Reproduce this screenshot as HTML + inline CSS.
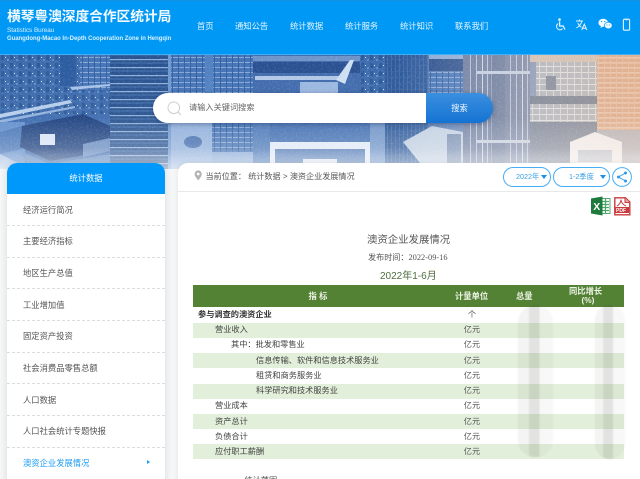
<!DOCTYPE html>
<html lang="zh-CN">
<head>
<meta charset="utf-8">
<title>澳资企业发展情况</title>
<style>
html,body{margin:0;padding:0;width:640px;height:479px;overflow:hidden;background:#f6f7f8}
body{font-family:"Liberation Sans","Noto Sans CJK SC",sans-serif;color:#444}
#w{position:absolute;left:0;top:0;width:640px;height:479px;overflow:hidden;filter:blur(.3px)}
.a{position:absolute;white-space:nowrap;line-height:1}
#head{position:absolute;left:0;top:0;width:640px;height:55px;background:#0098f5;border-top:1px solid #1590e0;border-bottom:1px solid #3fb0f5;box-sizing:border-box}
.nav{color:#e6f5ff;font-size:8.3px;top:21px}
#hero{position:absolute;left:0;top:54px;width:640px;height:115px;overflow:hidden}
#side{position:absolute;left:7px;top:163px;width:158px;height:330px;background:#fff;border-radius:10px;box-shadow:0 0 8px rgba(0,0,0,.12);overflow:hidden}
#side .h{height:31px;background:#0098fb;color:#fff;font-size:8.3px;line-height:31px;text-align:center}
#side .i{position:absolute;left:16px;font-size:8.3px;color:#555;line-height:1}
#side .l{position:absolute;left:0;width:158px;border-top:1px dashed #ddd}
#main{position:absolute;left:178px;top:163px;width:470px;height:330px;background:#fff;border-radius:10px;box-shadow:0 0 6px rgba(0,0,0,.08)}
.pill{position:absolute;top:167px;height:20px;box-sizing:border-box;border:1px solid #45aef7;border-radius:10px;color:#3b9fe6;font-size:7.2px;line-height:18px;background:#fff}
.tri{position:absolute;width:0;height:0;border-left:3.5px solid transparent;border-right:3.5px solid transparent;border-top:4px solid #1a8fe6;top:7px}
#thead{position:absolute;left:193px;top:285px;width:431px;height:22px;background:#548235}
.row{position:absolute;left:193px;width:431px;height:15px;background:#e2efda}
.t{position:absolute;font-size:8.2px;line-height:1;color:#444;white-space:nowrap}
.u{position:absolute;left:452px;width:40px;text-align:center;font-size:8.2px;line-height:1;color:#555}
.blur{position:absolute;top:305px;filter:blur(.7px)}
</style>
</head>
<body>
<div id="w">
<div id="hero">
<svg width="640" height="115" viewBox="0 0 640 115" xmlns="http://www.w3.org/2000/svg">
<defs>
<linearGradient id="bg" x1="0" x2="1" y1="0" y2="0"><stop offset="0" stop-color="#3a69ae"/><stop offset=".6" stop-color="#4471b3"/><stop offset=".75" stop-color="#5f7fb0"/><stop offset="1" stop-color="#8d93a8"/></linearGradient>
<linearGradient id="fade" x1="0" x2="0" y1="0" y2="1"><stop offset="0" stop-color="#fff" stop-opacity="0"/><stop offset=".55" stop-color="#fff" stop-opacity=".04"/><stop offset=".82" stop-color="#fff" stop-opacity=".26"/><stop offset="1" stop-color="#fff" stop-opacity=".66"/></linearGradient>
<linearGradient id="peach" x1="0" x2="1" y1="0" y2="0"><stop offset=".62" stop-color="#fff" stop-opacity="0"/><stop offset=".82" stop-color="#f4e6dc" stop-opacity=".32"/><stop offset="1" stop-color="#f6d2b8" stop-opacity=".4"/></linearGradient>
<pattern id="hs" width="10" height="8" patternUnits="userSpaceOnUse"><rect width="10" height="8" fill="#28528f"/><rect y="5" width="10" height="1.2" fill="#8eaedb"/><rect y="0" width="10" height="2" fill="#36629f"/></pattern>
<pattern id="hs2" width="6" height="5" patternUnits="userSpaceOnUse"><rect width="6" height="5" fill="#4372b5"/><rect y="3" width="6" height=".9" fill="#8dadda"/><rect x="4" width=".9" height="5" fill="#2c5a9e"/></pattern>
<pattern id="city" width="9" height="8" patternUnits="userSpaceOnUse"><rect width="9" height="8" fill="#3b69ab"/><rect x="1" y="1" width="3" height="5" fill="#2a5899"/><rect x="5" y="3" width="1" height="1" fill="#cfe0f5"/><rect x="7" y="5" width="2" height="2" fill="#5f8bc8"/></pattern>
<pattern id="vs" width="4" height="6" patternUnits="userSpaceOnUse"><rect width="4" height="6" fill="#2c5899"/><rect x="3" width=".7" height="6" fill="#4a72b0"/><rect y="5" width="4" height=".5" fill="#3d68a5"/></pattern>
<pattern id="vt" width="40" height="30" patternUnits="userSpaceOnUse"><rect width="40" height="30" fill="#62749a"/><rect x="2" width="1" height="30" fill="#c9d6ea"/><rect x="7" width="1" height="30" fill="#aebfda"/><rect x="11" width="1" height="30" fill="#c9d6ea"/><rect x="30" width="1" height="30" fill="#aabbd6"/><rect x="36" width="1" height="30" fill="#aebfda"/></pattern>
<pattern id="gr" width="7" height="6" patternUnits="userSpaceOnUse"><rect width="7" height="6" fill="#a0a9b5"/><rect width="7" height="1" fill="#dbe0e4"/><rect width="1" height="6" fill="#cfd5db"/></pattern>
<pattern id="or" width="6" height="5" patternUnits="userSpaceOnUse"><rect width="6" height="5" fill="#d29874"/><rect y="3.4" width="6" height="1" fill="#f0d3bd"/><rect x="4" width=".8" height="5" fill="#e0b392"/></pattern>
<filter id="n" x="0" y="0" width="100%" height="100%"><feTurbulence type="fractalNoise" baseFrequency=".55" numOctaves="2" seed="4"/><feColorMatrix values="0 0 0 0 1  0 0 0 0 1  0 0 0 0 1  1.6 0 0 0 -.72"/></filter>
</defs>
<rect width="640" height="115" fill="url(#bg)"/>
<rect x="0" y="0" width="110" height="60" fill="url(#city)"/>
<rect x="60" y="0" width="16" height="32" fill="#2a5a9f"/>
<rect x="80" y="0" width="30" height="36" fill="url(#hs2)"/>
<path d="M0 60 L70 46 L72 49 L0 64Z" fill="#b5cdeb"/>
<path d="M0 66 L75 52 L75 54 L0 69Z" fill="#8fb0dc"/>
<path d="M70 33 L110 30 L110 32 L72 36Z" fill="#a5c1e6"/>
<rect x="0" y="68" width="25" height="47" fill="#5f8ccb"/>
<path d="M0 78 L22 72 L22 95 L0 100Z" fill="#4675b7"/>
<path d="M22 72 L83 60 L110 72 L110 97 L50 107 L20 93Z" fill="#1d4180"/>
<path d="M83 90 L110 84 L110 97 L83 103Z" fill="#6589bf"/>
<rect x="40" y="80" width="15" height="11" fill="#d6e4f6"/>
<path d="M0 100 L30 115 L0 115Z" fill="#a0bce1"/>
<path d="M20 97 L50 110 L110 100 L110 115 L30 115Z" fill="#5582c0"/>
<rect x="110" y="0" width="58" height="115" fill="url(#hs)"/>
<rect x="168" y="0" width="3" height="115" fill="#6f98cf"/>
<rect x="171" y="0" width="34" height="40" fill="url(#hs2)"/>
<rect x="205" y="0" width="8" height="40" fill="#4f80c1"/>
<rect x="213" y="0" width="40" height="40" fill="url(#hs2)"/>
<rect x="253" y="0" width="131" height="39" fill="#3f6aac"/>
<rect x="253" y="2" width="131" height="5" fill="#6e93c9"/>
<rect x="253" y="8" width="131" height="11" fill="#284f90"/>
<rect x="255" y="22" width="88" height="4" fill="#b0c7e6"/>
<path d="M336 26 L350 6 L354 6 L345 30Z" fill="#cddff2"/>
<rect x="300" y="28" width="38" height="12" fill="#9ab7df"/>
<rect x="171" y="68" width="41" height="47" fill="#8fafdb"/>
<ellipse cx="193" cy="88" rx="9" ry="6" fill="#3f6aab"/>
<rect x="212" y="68" width="41" height="30" fill="url(#hs2)"/>
<rect x="212" y="98" width="41" height="17" fill="#85a6d5"/>
<rect x="253" y="68" width="17" height="47" fill="#4a78b8"/>
<rect x="270" y="88" width="100" height="27" fill="#dfe9f7"/>
<rect x="275" y="95" width="90" height="20" fill="#4f79b5"/>
<rect x="303" y="105" width="34" height="6" fill="#dfe7f2"/>
<rect x="370" y="68" width="15" height="47" fill="#6e93c7"/>
<rect x="385" y="0" width="43" height="115" fill="url(#vs)"/>
<rect x="360" y="0" width="25" height="39" fill="url(#city)"/>
<rect x="429" y="0" width="34" height="5" fill="#8aa8d2"/>
<rect x="429" y="5" width="34" height="12" fill="#294e8c"/>
<rect x="429" y="18" width="34" height="21" fill="url(#hs2)"/>
<path d="M403 88 L432 72 L463 78 L463 115 L425 115Z" fill="#bdcce0"/>
<rect x="447" y="80" width="14" height="30" fill="#6d86ad"/>
<rect x="463" y="0" width="67" height="115" fill="url(#vt)"/>
<rect x="490" y="0" width="15" height="115" fill="#4e648c" opacity=".55"/>
<rect x="476" y="17" width="54" height="3" fill="#b9c9de"/>
<rect x="476" y="86" width="54" height="3" fill="#b9c9de"/>
<rect x="530" y="0" width="67" height="8" fill="#c9b6a8"/>
<rect x="536" y="8" width="61" height="34" fill="url(#gr)"/>
<rect x="546" y="22" width="10" height="14" fill="#5e6f88"/>
<rect x="530" y="42" width="67" height="8" fill="#56677f"/>
<rect x="530" y="50" width="67" height="18" fill="url(#gr)"/>
<rect x="530" y="68" width="67" height="47" fill="#5a6a86"/>
<rect x="597" y="0" width="43" height="76" fill="url(#or)"/>
<rect x="597" y="76" width="43" height="39" fill="#9aa0ae"/>
<path d="M570 88 L595 78 L622 88 L622 110 L570 115Z" fill="#eef1f5"/>
<rect x="578" y="96" width="34" height="12" fill="#aab7ca"/>
<rect width="640" height="115" fill="#fff" filter="url(#n)" opacity=".2"/>
<rect width="640" height="115" fill="url(#peach)"/>
<rect width="640" height="115" fill="url(#fade)"/>
</svg>
</div>

<div id="head">
<div class="a" style="left:7px;top:9px;font-size:13.7px;font-weight:700;color:#f2faff">横琴粤澳深度合作区统计局</div>
<div class="a" style="left:7px;top:27px;font-size:6.3px;color:#d8f0ff">Statistics Bureau</div>
<div class="a" style="left:7px;top:36px;font-size:5.95px;color:#d8f0ff;font-weight:700">Guangdong-Macao In-Depth Cooperation Zone in Hengqin</div>
<div class="a nav" style="left:197px">首页</div>
<div class="a nav" style="left:235px">通知公告</div>
<div class="a nav" style="left:290px">统计数据</div>
<div class="a nav" style="left:345px">统计服务</div>
<div class="a nav" style="left:400px">统计知识</div>
<div class="a nav" style="left:455px">联系我们</div>
<svg style="position:absolute;left:554px;top:16px" width="84" height="16" viewBox="0 0 84 16" xmlns="http://www.w3.org/2000/svg" fill="none">
<circle cx="5.5" cy="2.6" r="1.3" fill="#eaf6ff"/>
<path d="M5.6 4.5V9H9.2L11 12.5" stroke="#eaf6ff" stroke-width="1.3"/>
<path d="M4.1 6.6A3.4 3.4 0 1 0 8.6 11.6" stroke="#eaf6ff" stroke-width="1"/>
<path d="M22 4H29M25.4 2.4V4M28 4C27 7.5 25 9.5 22.3 11M23.8 5.8C24.6 8 26 9.5 27.5 10.3" stroke="#eaf6ff" stroke-width=".9"/>
<path d="M27.8 13L30.3 7.2L32.8 13M28.7 11.2H31.9" stroke="#eaf6ff" stroke-width="1"/>
<ellipse cx="49.2" cy="5.7" rx="4.8" ry="4" fill="#f2faff"/>
<path d="M47 8.7L46.5 11L49.5 9.2Z" fill="#f2faff"/>
<ellipse cx="54.3" cy="8.5" rx="3.9" ry="3.3" fill="#f2faff" stroke="#0098f5" stroke-width=".7"/>
<circle cx="47.6" cy="4.5" r=".6" fill="#0098f5"/><circle cx="50.8" cy="4.5" r=".6" fill="#0098f5"/>
<circle cx="53" cy="8" r=".5" fill="#0098f5"/><circle cx="55.6" cy="8" r=".5" fill="#0098f5"/>
<rect x="69.4" y="2.2" width="6.2" height="11" rx="1.2" stroke="#eaf6ff" stroke-width="1.1"/>
<path d="M71.5 3H73.5" stroke="#eaf6ff" stroke-width=".6"/>
</svg>
</div>

<div style="position:absolute;left:153px;top:93px;width:340px;height:30px;border-radius:15px;box-shadow:0 1px 5px rgba(30,50,90,.45)"></div>
<div style="position:absolute;left:153px;top:93px;width:273px;height:30px;background:#fff;border-radius:15px 0 0 15px"></div>
<div style="position:absolute;left:426px;top:93px;width:67px;height:30px;background:linear-gradient(#3a8fdf,#1473d3);border-radius:0 15px 15px 0;color:#f0f7ff;font-size:8.3px;line-height:30px;text-align:center">搜索</div>
<svg style="position:absolute;left:166px;top:100px" width="17" height="17" viewBox="0 0 17 17" fill="none" xmlns="http://www.w3.org/2000/svg"><circle cx="7.8" cy="7.8" r="5.8" stroke="#cdd0d3" stroke-width="1"/><path d="M12 12L14.8 14.8" stroke="#cdd0d3" stroke-width="1.2"/></svg>
<div class="a" style="left:189px;top:104px;font-size:8.2px;color:#666">请输入关键词搜索</div>

<div id="side">
<div class="h">统计数据</div>
<div class="i" style="top:43px">经济运行简况</div><div class="l" style="top:62px"></div>
<div class="i" style="top:74px">主要经济指标</div><div class="l" style="top:94px"></div>
<div class="i" style="top:106px">地区生产总值</div><div class="l" style="top:125px"></div>
<div class="i" style="top:138px">工业增加值</div><div class="l" style="top:157px"></div>
<div class="i" style="top:169px">固定资产投资</div><div class="l" style="top:189px"></div>
<div class="i" style="top:201px">社会消费品零售总额</div><div class="l" style="top:220px"></div>
<div class="i" style="top:233px">人口数据</div><div class="l" style="top:252px"></div>
<div class="i" style="top:264px">人口社会统计专题快报</div><div class="l" style="top:284px"></div>
<div class="i" style="top:296px;color:#1a9bf5">澳资企业发展情况</div>
<div style="position:absolute;left:140px;top:297px;width:0;height:0;border-left:3px solid #1a9bf5;border-top:2.5px solid transparent;border-bottom:2.5px solid transparent"></div>
</div>

<div id="main"></div>
<div style="position:absolute;left:178px;top:191px;width:462px;height:1px;background:#e8e8e8"></div>
<svg style="position:absolute;left:194px;top:170px" width="9" height="11" viewBox="0 0 9 11" xmlns="http://www.w3.org/2000/svg"><path fill-rule="evenodd" d="M4.2 10.5C2.5 8 .6 6.2.6 4A3.6 3.6 0 0 1 7.8 4C7.8 6.2 6 8 4.2 10.5ZM4.2 5.4A1.4 1.4 0 1 0 4.2 2.6A1.4 1.4 0 0 0 4.2 5.4Z" fill="#b3b3b3"/></svg>
<div class="a" style="left:205.5px;top:172.5px;font-size:8.1px;color:#555">当前位置： 统计数据 &gt; 澳资企业发展情况</div>

<div class="pill" style="left:503px;width:48px;padding-left:12px">2022年<span class="tri" style="left:37px"></span></div>
<div class="pill" style="left:553px;width:57px;padding-left:15px">1-2季度<span class="tri" style="left:46px"></span></div>
<svg style="position:absolute;left:612px;top:167px" width="20" height="20" viewBox="0 0 20 20" fill="none" xmlns="http://www.w3.org/2000/svg"><circle cx="10" cy="10" r="9.4" stroke="#45aef7"/><path d="M13.5 6L6.5 10L13.5 14" stroke="#2e9bea" stroke-width=".9"/><circle cx="13.5" cy="6" r="1.5" fill="#2e9bea"/><circle cx="6.5" cy="10" r="1.5" fill="#2e9bea"/><circle cx="13.5" cy="14" r="1.5" fill="#2e9bea"/></svg>

<svg style="position:absolute;left:591px;top:196px" width="20" height="20" viewBox="0 0 20 20" xmlns="http://www.w3.org/2000/svg">
<rect x="8" y="2.5" width="11" height="15" fill="#fff" stroke="#2f8f4b" stroke-width=".8"/>
<path d="M11 5.5H18M11 8.5H18M11 11.5H18M11 14.5H18M14.5 3V17" stroke="#49a866" stroke-width="1.2"/>
<path d="M0 2.5L11.5 .5V19.5L0 17.5Z" fill="#1f7a3d"/>
<text x="2.2" y="14" font-family="Liberation Sans" font-size="10.5" font-weight="700" fill="#fff">X</text>
</svg>
<svg style="position:absolute;left:614px;top:197px" width="17" height="19" viewBox="0 0 17 19" xmlns="http://www.w3.org/2000/svg" fill="none">
<path d="M.8 .8H11.5L15.8 5V17.8H.8Z" fill="#fff" stroke="#c93a3d" stroke-width="1.4"/>
<path d="M11 .8V5.5H15.8" fill="#e8a8a8" stroke="#c93a3d" stroke-width="1"/>
<path d="M3 9C6 7 7 4.5 7 2.5C7 5 9 7.5 12 9" stroke="#c93a3d" stroke-width="1"/>
<rect x="1" y="10" width="14" height="6" fill="#c93a3d"/>
<text x="2" y="15" font-family="Liberation Sans" font-size="5" font-weight="700" fill="#fff">PDF</text>
</svg>

<div class="a" style="left:367px;top:235.5px;font-size:10.4px;color:#555">澳资企业发展情况</div>
<div class="a" style="left:368px;top:254px;font-size:8.1px;color:#555">发布时间：<span style="font-family:'Liberation Serif',serif;font-size:8.4px">2022-09-16</span></div>
<div class="a" style="left:380px;top:271.5px;font-size:10px;color:#4f6f3f">2022年1-6月</div>

<div id="thead"></div>
<div class="a" style="left:308.5px;top:292px;font-size:8.3px;font-weight:700;color:#eef3e8">指 标</div>
<div class="a" style="left:455px;top:292px;font-size:8.3px;font-weight:700;color:#eef3e8">计量单位</div>
<div class="a" style="left:516px;top:292px;font-size:8.3px;font-weight:700;color:#eef3e8">总量</div>
<div class="a" style="left:569px;top:286.5px;font-size:8.3px;font-weight:700;color:#eef3e8">同比增长</div>
<div class="a" style="left:581.5px;top:296px;font-size:8.3px;font-weight:700;color:#eef3e8">(%)</div>

<div class="row" style="top:323px"></div>
<div class="row" style="top:353px"></div>
<div class="row" style="top:384px"></div>
<div class="row" style="top:414px"></div>
<div class="row" style="top:444px"></div>

<div class="t" style="left:198px;top:310.5px;font-weight:700;color:#333">参与调查的澳资企业</div>
<div class="t" style="left:215px;top:326px">营业收入</div>
<div class="t" style="left:231px;top:341px">其中：批发和零售业</div>
<div class="t" style="left:256px;top:356.5px">信息传输、软件和信息技术服务业</div>
<div class="t" style="left:256px;top:371.5px">租赁和商务服务业</div>
<div class="t" style="left:256px;top:387px">科学研究和技术服务业</div>
<div class="t" style="left:215px;top:402px">营业成本</div>
<div class="t" style="left:215px;top:417.5px">资产总计</div>
<div class="t" style="left:215px;top:432.5px">负债合计</div>
<div class="t" style="left:215px;top:447.5px">应付职工薪酬</div>
<div class="t" style="left:228px;top:476.5px">一、统计范围</div>

<div class="u" style="top:310.5px">个</div>
<div class="u" style="top:326px">亿元</div>
<div class="u" style="top:341px">亿元</div>
<div class="u" style="top:356.5px">亿元</div>
<div class="u" style="top:371.5px">亿元</div>
<div class="u" style="top:387px">亿元</div>
<div class="u" style="top:402px">亿元</div>
<div class="u" style="top:417.5px">亿元</div>
<div class="u" style="top:432.5px">亿元</div>
<div class="u" style="top:447.5px">亿元</div>

<div class="blur" style="left:518px;width:35px;height:152px;border-radius:17px;background:linear-gradient(90deg,rgba(120,130,115,.09) 0,rgba(120,130,115,.09) 31%,rgba(60,65,55,.15) 32%,rgba(60,65,55,.15) 61%,rgba(120,130,115,.06) 62%)"></div>
<div class="blur" style="left:595px;width:30px;height:154px;border-radius:15px;background:linear-gradient(90deg,rgba(120,130,115,.09) 0,rgba(120,130,115,.09) 27%,rgba(60,65,55,.15) 28%,rgba(60,65,55,.15) 60%,rgba(120,130,115,.06) 61%)"></div>
</div>
</body>
</html>
